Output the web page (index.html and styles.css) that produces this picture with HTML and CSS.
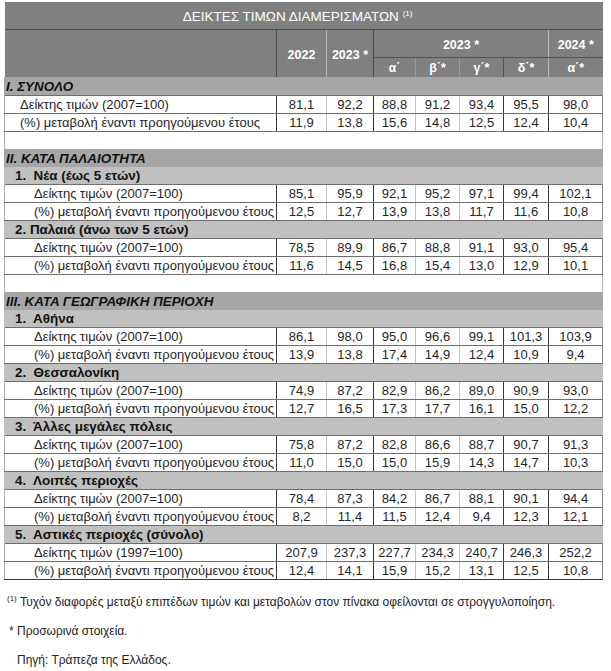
FILE: index.html
```html
<!DOCTYPE html>
<html lang="el">
<head>
<meta charset="utf-8">
<title>Δείκτες τιμών διαμερισμάτων</title>
<link rel="stylesheet" href="styles.css">
</head>
<body>
<div class="page">
<table class="idx">
<colgroup>
<col class="c-label"><col class="c-y1"><col class="c-y2"><col class="c-q1"><col class="c-q2"><col class="c-q3"><col class="c-q4"><col class="c-q5">
</colgroup>
<thead>
<tr class="title-row"><th colspan="8"><span class="title">ΔΕΙΚΤΕΣ ΤΙΜΩΝ ΔΙΑΜΕΡΙΣΜΑΤΩΝ <sup>(1)</sup></span></th></tr>
<tr class="hd1">
<th rowspan="2" class="h-label"></th>
<th rowspan="2" class="h-y1">2022</th>
<th rowspan="2" class="h-y2">2023 *</th>
<th colspan="4" class="h-grp">2023 *</th>
<th class="h-grp2">2024 *</th>
</tr>
<tr class="hd2">
<th class="h-q1">α΄</th><th class="h-q2">β΄*</th><th class="h-q3">γ΄*</th><th class="h-q4">δ΄*</th><th class="h-q5">α΄*</th>
</tr>
</thead>
<tbody>
<tr class="sec"><td colspan="8">I. ΣΥΝΟΛΟ</td></tr>
<tr class="row l1"><td>Δείκτης τιμών (2007=100)</td><td>81,1</td><td>92,2</td><td>88,8</td><td>91,2</td><td>93,4</td><td>95,5</td><td>98,0</td></tr>
<tr class="row l1"><td>(%) μεταβολή έναντι προηγούμενου έτους</td><td>11,9</td><td>13,8</td><td>15,6</td><td>14,8</td><td>12,5</td><td>12,4</td><td>10,4</td></tr>
<tr class="blank"><td colspan="8"></td></tr>

<tr class="sec"><td colspan="8">II. ΚΑΤΑ ΠΑΛΑΙΟΤΗΤΑ</td></tr>
<tr class="sub"><td colspan="8">1.&nbsp; Νέα (έως 5 ετών)</td></tr>
<tr class="row l2"><td>Δείκτης τιμών (2007=100)</td><td>85,1</td><td>95,9</td><td>92,1</td><td>95,2</td><td>97,1</td><td>99,4</td><td>102,1</td></tr>
<tr class="row l2"><td>(%) μεταβολή έναντι προηγούμενου έτους</td><td>12,5</td><td>12,7</td><td>13,9</td><td>13,8</td><td>11,7</td><td>11,6</td><td>10,8</td></tr>
<tr class="sub"><td colspan="8">2. Παλαιά (άνω των 5 ετών)</td></tr>
<tr class="row l2"><td>Δείκτης τιμών (2007=100)</td><td>78,5</td><td>89,9</td><td>86,7</td><td>88,8</td><td>91,1</td><td>93,0</td><td>95,4</td></tr>
<tr class="row l2"><td>(%) μεταβολή έναντι προηγούμενου έτους</td><td>11,6</td><td>14,5</td><td>16,8</td><td>15,4</td><td>13,0</td><td>12,9</td><td>10,1</td></tr>
<tr class="blank"><td colspan="8"></td></tr>

<tr class="sec"><td colspan="8">III. ΚΑΤΑ ΓΕΩΓΡΑΦΙΚΗ ΠΕΡΙΟΧΗ</td></tr>
<tr class="sub"><td colspan="8">1.&nbsp; Αθήνα</td></tr>
<tr class="row l2"><td>Δείκτης τιμών (2007=100)</td><td>86,1</td><td>98,0</td><td>95,0</td><td>96,6</td><td>99,1</td><td>101,3</td><td>103,9</td></tr>
<tr class="row l2"><td>(%) μεταβολή έναντι προηγούμενου έτους</td><td>13,9</td><td>13,8</td><td>17,4</td><td>14,9</td><td>12,4</td><td>10,9</td><td>9,4</td></tr>
<tr class="sub"><td colspan="8">2.&nbsp; Θεσσαλονίκη</td></tr>
<tr class="row l2"><td>Δείκτης τιμών (2007=100)</td><td>74,9</td><td>87,2</td><td>82,9</td><td>86,2</td><td>89,0</td><td>90,9</td><td>93,0</td></tr>
<tr class="row l2"><td>(%) μεταβολή έναντι προηγούμενου έτους</td><td>12,7</td><td>16,5</td><td>17,3</td><td>17,7</td><td>16,1</td><td>15,0</td><td>12,2</td></tr>
<tr class="sub"><td colspan="8">3.&nbsp; Άλλες μεγάλες πόλεις</td></tr>
<tr class="row l2"><td>Δείκτης τιμών (2007=100)</td><td>75,8</td><td>87,2</td><td>82,8</td><td>86,6</td><td>88,7</td><td>90,7</td><td>91,3</td></tr>
<tr class="row l2"><td>(%) μεταβολή έναντι προηγούμενου έτους</td><td>11,0</td><td>15,0</td><td>15,0</td><td>15,9</td><td>14,3</td><td>14,7</td><td>10,3</td></tr>
<tr class="sub"><td colspan="8">4.&nbsp; Λοιπές περιοχές</td></tr>
<tr class="row l2"><td>Δείκτης τιμών (2007=100)</td><td>78,4</td><td>87,3</td><td>84,2</td><td>86,7</td><td>88,1</td><td>90,1</td><td>94,4</td></tr>
<tr class="row l2"><td>(%) μεταβολή έναντι προηγούμενου έτους</td><td>8,2</td><td>11,4</td><td>11,5</td><td>12,4</td><td>9,4</td><td>12,3</td><td>12,1</td></tr>
<tr class="sub"><td colspan="8">5.&nbsp; Αστικές περιοχές (σύνολο)</td></tr>
<tr class="row l2"><td>Δείκτης τιμών (1997=100)</td><td>207,9</td><td>237,3</td><td>227,7</td><td>234,3</td><td>240,7</td><td>246,3</td><td>252,2</td></tr>
<tr class="row l2 last"><td>(%) μεταβολή έναντι προηγούμενου έτους</td><td>12,4</td><td>14,1</td><td>15,9</td><td>15,2</td><td>13,1</td><td>12,5</td><td>10,8</td></tr>
</tbody>
</table>

<div class="notes">
<p class="note n1"><sup>(1)</sup> Τυχόν διαφορές μεταξύ επιπέδων τιμών και μεταβολών στον πίνακα οφείλονται σε στρογγυλοποίηση.</p>
<p class="note n2">* Προσωρινά στοιχεία.</p>
<p class="note n3">Πηγή: Τράπεζα της Ελλάδος.</p>
</div>
</div>
</body>
</html>
```
FILE: styles.css
```css
html, body {
  margin: 0;
  padding: 0;
  background: #ffffff;
}
body {
  font-family: "Liberation Sans", Arial, "DejaVu Sans", sans-serif;
  color: #222222;
}
.page {
  padding: 2px 0 0 4px;
}
.idx {
  border-collapse: collapse;
  table-layout: fixed;
  width: 598px;
  font-size: 13px;
}
.c-label { width: 272px; }
.c-y1 { width: 50px; }
.c-y2 { width: 47px; }
.c-q1 { width: 42px; }
.c-q2 { width: 44px; }
.c-q3 { width: 44px; }
.c-q4 { width: 45px; }
.c-q5 { width: 54px; }

.idx th, .idx td {
  padding: 0;
  white-space: nowrap;
  overflow: hidden;
}

/* header */
.title-row th {
  background: #808080;
  color: #ffffff;
  font-weight: normal;
  font-size: 13.5px;
  height: 25px;
  text-align: center;
  vertical-align: middle;
  padding-top: 2px;
  padding-right: 12px;
  border-bottom: 1px solid #4d4d4d;
}
.title-row sup {
  font-size: 8px;
  line-height: 0;
  vertical-align: 5px;
}
.hd1 th, .hd2 th {
  background: #808080;
  color: #ffffff;
  font-weight: bold;
  font-size: 12.5px;
  text-align: center;
}
.hd1 th {
  height: 25px;
  vertical-align: middle;
  padding-top: 2px;
}
.hd2 th {
  height: 19px;
  vertical-align: middle;
}
.h-y1 { border-left: 1px solid #4d4d4d; }
.h-y2 { border-left: 1px solid #b8b8b8; }
.h-grp { border-left: 1px solid #4d4d4d; border-bottom: 1px solid #555555; }
.h-grp2 { border-left: 1px solid #b8b8b8; border-bottom: 1px solid #555555; }
.h-q1 { border-left: 1px solid #4d4d4d; }
.h-q2, .h-q3 { border-left: 1px solid #999999; }
.h-q4 { border-left: 1px solid #555555; }
.h-q5 { border-left: 1px solid #b8b8b8; }
.hd2 th.h-q1 { font-size: 12px; }

/* section rows */
.sec td {
  background: #a6a6a6;
  font-weight: bold;
  font-style: italic;
  font-size: 13.4px;
  height: 18px;
  padding-left: 1px;
  color: #111111;
  border-left: 1px solid #a6a6a6;
}
.sub td {
  background: #c0c0c0;
  font-weight: bold;
  font-size: 13.4px;
  height: 17px;
  padding-left: 10px;
  color: #111111;
  border-left: 1px solid #c0c0c0;
}
.blank td {
  height: 17px;
  border-left: 1px solid #b0b0b0;
  border-right: 1px solid #b0b0b0;
}

/* data rows */
.row td {
  height: 17px;
  text-align: center;
  color: #262626;
  border-top: 1px solid #6e6e6e;
  border-bottom: 1px solid #6e6e6e;
  border-left: 1px solid #c4c4c4;
}
.row td:first-child {
  text-align: left;
  border-left: 1px solid #b0b0b0;
}
.row.l1 td:first-child { padding-left: 15px; }
.row.l2 td:first-child { padding-left: 29px; }
.row td:nth-child(2),
.row td:nth-child(4),
.row td:nth-child(7),
.row td:nth-child(8) {
  border-left: 1px solid #3a3a3a;
}
.row td:last-child {
  border-right: 1px solid #8a8a8a;
}
.row.last td {
  border-bottom: 1px solid #3a3a3a;
}

/* notes */
.notes {
  font-size: 12px;
  color: #222222;
  padding-top: 8px;
}
.note {
  margin: 0;
  line-height: 29px;
  height: 29px;
}
.note sup {
  font-size: 8px;
  line-height: 0;
  vertical-align: 5px;
}
.n1 { padding-left: 3px; }
.n2 { padding-left: 5px; }
.n3 { padding-left: 13px; }
```
